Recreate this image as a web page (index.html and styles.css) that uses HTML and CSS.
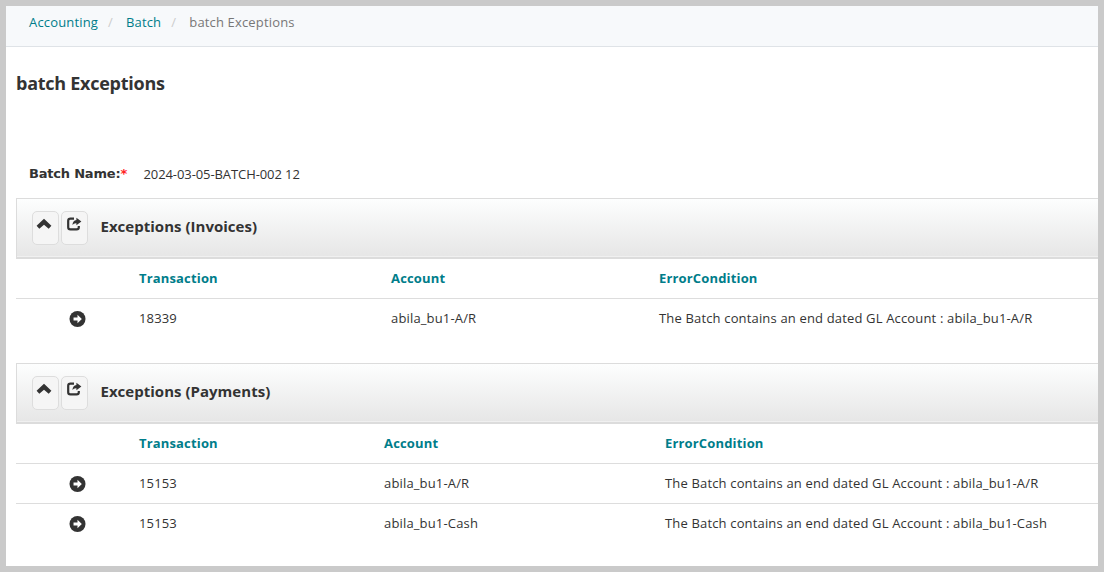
FILE: index.html
```html
<!DOCTYPE html>
<html lang="en">
  <head>
    <meta charset="UTF-8" />
    <title>batch Exceptions</title>
    <meta name="viewport" content="width=device-width,initial-scale=1" />
    <link rel="stylesheet" href="styles.css">
  </head>
  <body>
    <svg class="sprite" width="0" height="0">
      <symbol id="chevron" viewBox="0 0 16 12">
        <path d="M8 .8 15.4 7.8 12.7 10.8 8 6.8 3.3 10.8 .6 7.8Z" />
      </symbol>
      <symbol id="share" viewBox="0 0 16 14">
        <path d="M8 1.6H4.4Q2.2 1.6 2.2 3.8V10.2Q2.2 12.4 4.4 12.4H10.6Q12.8 12.4 12.8 10.2V9" fill="none" stroke="currentColor" stroke-width="2.2" />
        <path d="M10.4 .8 15.4 4.6 10.4 8.2V6.2Q7.8 6 6.4 8 6.8 3.4 10.4 3Z" />
      </symbol>
      <symbol id="go" viewBox="0 0 18 18">
        <circle cx="9" cy="9" r="8.5" />
        <path d="M4.8 7.4H9V4.6L13.6 9 9 13.4V10.6H4.8Z" fill="#fff" />
      </symbol>
    </svg>
    <nav class="breadcrumb">
      <a href="#">Accounting</a>
      <span class="divider">/</span>
      <a href="#">Batch</a>
      <span class="divider">/</span>
      <span class="current">batch Exceptions</span>
    </nav>
    <main>
      <h1>batch Exceptions</h1>
      <div class="field">
        <span class="label">Batch Name:<span class="required">*</span></span>
        <span class="value">2024-03-05-BATCH-002 12</span>
      </div>

      <section class="panel invoices">
        <div class="panel-header">
          <button class="btn"><svg class="icon-chevron"><use href="#chevron" /></svg></button>
          <button class="btn"><svg class="icon-share"><use href="#share" /></svg></button>
          <h2>Exceptions (Invoices)</h2>
        </div>
        <div class="row head">
          <span></span><span>Transaction</span><span>Account</span><span>ErrorCondition</span>
        </div>
        <div class="row">
          <span class="go"><svg class="icon-go"><use href="#go" /></svg></span>
          <span>18339</span>
          <span>abila_bu1-A/R</span>
          <span>The Batch contains an end dated GL Account : abila_bu1-A/R</span>
        </div>
      </section>

      <section class="panel payments">
        <div class="panel-header">
          <button class="btn"><svg class="icon-chevron"><use href="#chevron" /></svg></button>
          <button class="btn"><svg class="icon-share"><use href="#share" /></svg></button>
          <h2>Exceptions (Payments)</h2>
        </div>
        <div class="row head">
          <span></span><span>Transaction</span><span>Account</span><span>ErrorCondition</span>
        </div>
        <div class="row">
          <span class="go"><svg class="icon-go"><use href="#go" /></svg></span>
          <span>15153</span>
          <span>abila_bu1-A/R</span>
          <span>The Batch contains an end dated GL Account : abila_bu1-A/R</span>
        </div>
        <div class="row">
          <span class="go"><svg class="icon-go"><use href="#go" /></svg></span>
          <span>15153</span>
          <span>abila_bu1-Cash</span>
          <span>The Batch contains an end dated GL Account : abila_bu1-Cash</span>
        </div>
      </section>
    </main>
  </body>
</html>
```
FILE: styles.css
```css
* {
  box-sizing: border-box;
}
body {
  margin: 0;
  height: 572px;
  border: 6px solid #cacaca;
  background: #fff;
  color: #333;
  font-family: "Open Sans", sans-serif;
  font-size: 13px;
  line-height: 20px;
  letter-spacing: 0.16px;
  overflow: hidden;
}
.sprite {
  display: block;
}
svg {
  fill: currentColor;
}
.breadcrumb {
  display: flex;
  height: 41px;
  padding: 6px 23px;
  background: #f7f9fb;
  border-bottom: 1px solid #dfe3e7;
}
.breadcrumb a {
  color: #007d8a;
  text-decoration: none;
}
.divider {
  width: 28px;
  padding-left: 10px;
  color: #ccc;
}
.current {
  color: #777;
}
main {
  padding-left: 10px;
}
h1 {
  margin: 24px 0 0;
  font-size: 18px;
  font-weight: 700;
  line-height: 24px;
  letter-spacing: -0.26px;
}
.field {
  display: flex;
  height: 20px;
  margin: 69px 0 14px 12px;
}
.label {
  width: 115.5px;
  padding-left: 1px;
  font-family: "DejaVu Sans", sans-serif;
  font-size: 13px;
  font-weight: bold;
  line-height: 20px;
  letter-spacing: -0.2px;
}
.required {
  color: #f22;
}
.value {
  letter-spacing: -0.09px;
}
.panel-header {
  display: flex;
  height: 61px;
  padding: 12px 0 0 15px;
  background: linear-gradient(#fdfefe, #e6e6e6);
  border: 1px solid #dcdcdc;
  border-width: 1px 0 2px 1px;
  box-shadow: inset 0 -1px #f0f0f0;
}
.btn {
  display: flex;
  justify-content: center;
  width: 27px;
  height: 34px;
  margin-right: 2px;
  padding: 6px 0 0;
  color: #333;
  background: #f5f5f5;
  border: 1px solid #ddd;
  border-radius: 5px;
}
.icon-chevron {
  width: 16px;
  height: 12px;
  margin-right: 3px;
}
.icon-share {
  width: 16px;
  height: 14px;
  margin: -1px 1px 0 0;
}
h2 {
  margin: 5px 0 0 10.5px;
  font-size: 15px;
  font-weight: 700;
  line-height: 20px;
  letter-spacing: 0.02px;
}
.row {
  display: grid;
  height: 40px;
  padding-top: 9px;
  border-top: 1px solid #ddd;
}
.head {
  height: 39px;
  border-top: none;
  color: #007d8a;
  font-weight: 700;
}
.invoices {
  height: 165px;
}
.invoices .row {
  grid-template-columns: 123px 252px 268px 1fr;
}
.payments .row {
  grid-template-columns: 123px 245px 281px 1fr;
}
.go {
  padding: 2px 0 0 53px;
}
.icon-go {
  display: block;
  width: 17px;
  height: 18px;
}
```
